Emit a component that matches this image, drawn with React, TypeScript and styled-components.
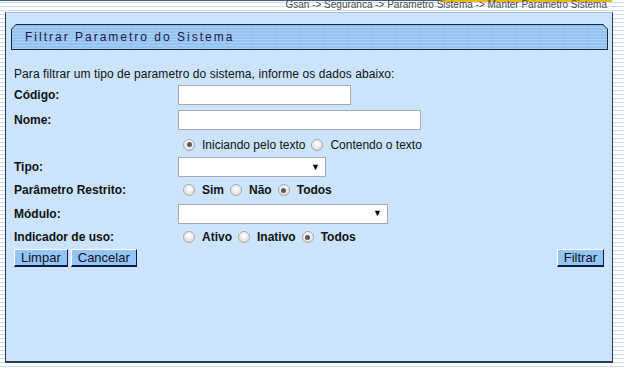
import { createGlobalStyle } from "styled-components";
import styled from "styled-components";

const GlobalStyle = createGlobalStyle`
  html, body {
    margin: 0;
    padding: 0;
  }
  body {
    font-family: "Liberation Sans", Arial, sans-serif;
    background: #fff;
  }
`;

const Page = styled.div`
  width: 624px;
  height: 370px;
  overflow: hidden;
  background: repeating-linear-gradient(
    to bottom,
    #ffffff 0px,
    #ffffff 2px,
    #c9def2 2px,
    #c9def2 3px,
    #ffffff 3px,
    #ffffff 4px
  );
  display: flex;
  flex-direction: column;
`;

const TopLines = styled.div`
  display: flex;
  height: 2px;
  width: 612px;
`;

const BlueLine = styled.div`
  width: 440px;
  height: 1px;
  background: #3a5a8a;
`;

const OrangeLine = styled.div`
  flex: 1;
  height: 2px;
  background: #f2b716;
`;

const Breadcrumb = styled.div`
  height: 12px;
  margin-top: -2px;
  padding-right: 17px;
  text-align: right;
  font-size: 10px;
  line-height: 10px;
  color: #4a4a4a;
  white-space: nowrap;
`;

const Panel = styled.div`
  margin-left: 5px;
  width: 608px;
  height: 351px;
  background: #cbe4fc;
  border-top: 1px solid #a4bfd9;
  border-left: 1px solid #2c3b52;
  border-right: 1px solid #2c3b52;
  border-bottom: 2px solid #2c3b52;
  box-sizing: border-box;
  padding: 11px 4px 0 5px;
  display: flex;
  flex-direction: column;
`;

const TitleFrame = styled.div`
  height: 26px;
  background: #1d2636;
  clip-path: polygon(5px 0, calc(100% - 5px) 0, 100% 5px, 100% 100%, 0 100%, 0 5px);
  padding: 1px;
  box-sizing: border-box;
  display: flex;
`;

const TitleBar = styled.div`
  flex: 1;
  clip-path: polygon(4px 0, calc(100% - 4px) 0, 100% 4px, 100% 100%, 0 100%, 0 4px);
  background:
    repeating-linear-gradient(
      to right,
      transparent 0px,
      transparent 23px,
      rgba(120, 160, 210, 0.25) 23px,
      rgba(120, 160, 210, 0.25) 24px
    ),
    repeating-linear-gradient(
      to bottom,
      #93c1f0 0px,
      #93c1f0 2px,
      #acd1f7 2px,
      #acd1f7 3px
    );
  display: flex;
  align-items: center;
  padding-left: 13px;
`;

const Title = styled.span`
  font-size: 12px;
  letter-spacing: 2px;
  color: #231748;
`;

const Form = styled.div`
  padding: 16px 4px 0 3px;
  display: flex;
  flex-direction: column;
`;

const Intro = styled.div`
  height: 17px;
  font-size: 12px;
  line-height: 16px;
  letter-spacing: 0.08px;
  color: #111;
`;

const Row = styled.div<{ $h: number }>`
  height: ${(p) => p.$h}px;
  display: grid;
  grid-template-columns: 164px 1fr;
  align-items: center;
`;

const Label = styled.span`
  font-size: 12px;
  font-weight: bold;
  color: #111;
`;

const TextInput = styled.div<{ $w: number }>`
  width: ${(p) => p.$w}px;
  height: 20px;
  background: #fff;
  border: 1px solid #a9a9a9;
  box-sizing: border-box;
`;

const SelectBox = styled.div<{ $w: number }>`
  width: ${(p) => p.$w}px;
  height: 20px;
  background: #fff;
  border: 1px solid #a9a9a9;
  box-sizing: border-box;
  display: flex;
  align-items: center;
  justify-content: flex-end;
  padding-right: 5px;
`;

const Arrow = styled.span`
  font-size: 9px;
  color: #000;
  line-height: 1;
`;

const RadioGroup = styled.div`
  display: flex;
  align-items: center;
  padding-left: 5px;
  gap: 6px;
`;

const RadioOption = styled.label`
  display: flex;
  align-items: center;
  gap: 7px;
`;

const RadioDot = styled.span<{ $on?: boolean }>`
  width: 12px;
  height: 12px;
  border-radius: 50%;
  box-sizing: border-box;
  border: 1px solid #a8a8a8;
  background: radial-gradient(circle at 50% 35%, #ffffff 0%, #e6e6e6 60%, #cfcfcf 100%);
  display: flex;
  align-items: center;
  justify-content: center;
  &::after {
    content: "";
    width: 5px;
    height: 5px;
    border-radius: 50%;
    background: #5a5a5a;
    display: ${(p) => (p.$on ? "block" : "none")};
  }
`;

const RadioText = styled.span<{ $bold?: boolean }>`
  font-size: 12px;
  font-weight: ${(p) => (p.$bold ? "bold" : "normal")};
  color: #111;
`;

const ButtonBar = styled.div`
  margin-top: -1px;
  display: flex;
  justify-content: space-between;
`;

const ButtonGroup = styled.div`
  display: flex;
  gap: 3px;
`;

const Button = styled.button`
  height: 18px;
  padding: 0 6px;
  background: #93c5fb;
  border-top: 1px solid #ffffff;
  border-left: 1px solid #ffffff;
  border-right: 1px solid #0d1a3d;
  border-bottom: 2px solid #0d1a3d;
  box-sizing: border-box;
  font-family: "Liberation Sans", Arial, sans-serif;
  font-size: 13px;
  line-height: 14px;
  color: #111;
  cursor: pointer;
`;

type Opt = { text: string; on?: boolean };

const Radios = ({ opts, bold }: { opts: Opt[]; bold?: boolean }) => (
  <RadioGroup>
    {opts.map((o) => (
      <RadioOption key={o.text}>
        <RadioDot $on={o.on} />
        <RadioText $bold={bold}>{o.text}</RadioText>
      </RadioOption>
    ))}
  </RadioGroup>
);

export default function App() {
  return (
    <>
      <GlobalStyle />
      <Page>
        <TopLines>
          <BlueLine />
          <OrangeLine />
        </TopLines>
        <Breadcrumb>
          Gsan -&gt; Seguranca -&gt; Parametro Sistema -&gt; Manter Parametro Sistema
        </Breadcrumb>
        <Panel>
          <TitleFrame>
            <TitleBar>
              <Title>Filtrar Parametro do Sistema</Title>
            </TitleBar>
          </TitleFrame>
          <Form>
            <Intro>
              Para filtrar um tipo de parametro do sistema, informe os dados abaixo:
            </Intro>
            <Row $h={24}>
              <Label>Código:</Label>
              <TextInput $w={173} />
            </Row>
            <Row $h={25}>
              <Label>Nome:</Label>
              <TextInput $w={243} />
            </Row>
            <Row $h={25}>
              <span />
              <Radios
                opts={[
                  { text: "Iniciando pelo texto", on: true },
                  { text: "Contendo o texto" },
                ]}
              />
            </Row>
            <Row $h={20}>
              <Label>Tipo:</Label>
              <SelectBox $w={148}>
                <Arrow>▼</Arrow>
              </SelectBox>
            </Row>
            <Row $h={26}>
              <Label>Parâmetro Restrito:</Label>
              <Radios
                bold
                opts={[{ text: "Sim" }, { text: "Não" }, { text: "Todos", on: true }]}
              />
            </Row>
            <Row $h={21}>
              <Label>Módulo:</Label>
              <SelectBox $w={210}>
                <Arrow>▼</Arrow>
              </SelectBox>
            </Row>
            <Row $h={26}>
              <Label>Indicador de uso:</Label>
              <Radios
                bold
                opts={[{ text: "Ativo" }, { text: "Inativo" }, { text: "Todos", on: true }]}
              />
            </Row>
            <ButtonBar>
              <ButtonGroup>
                <Button>Limpar</Button>
                <Button>Cancelar</Button>
              </ButtonGroup>
              <Button>Filtrar</Button>
            </ButtonBar>
          </Form>
        </Panel>
      </Page>
    </>
  );
}
